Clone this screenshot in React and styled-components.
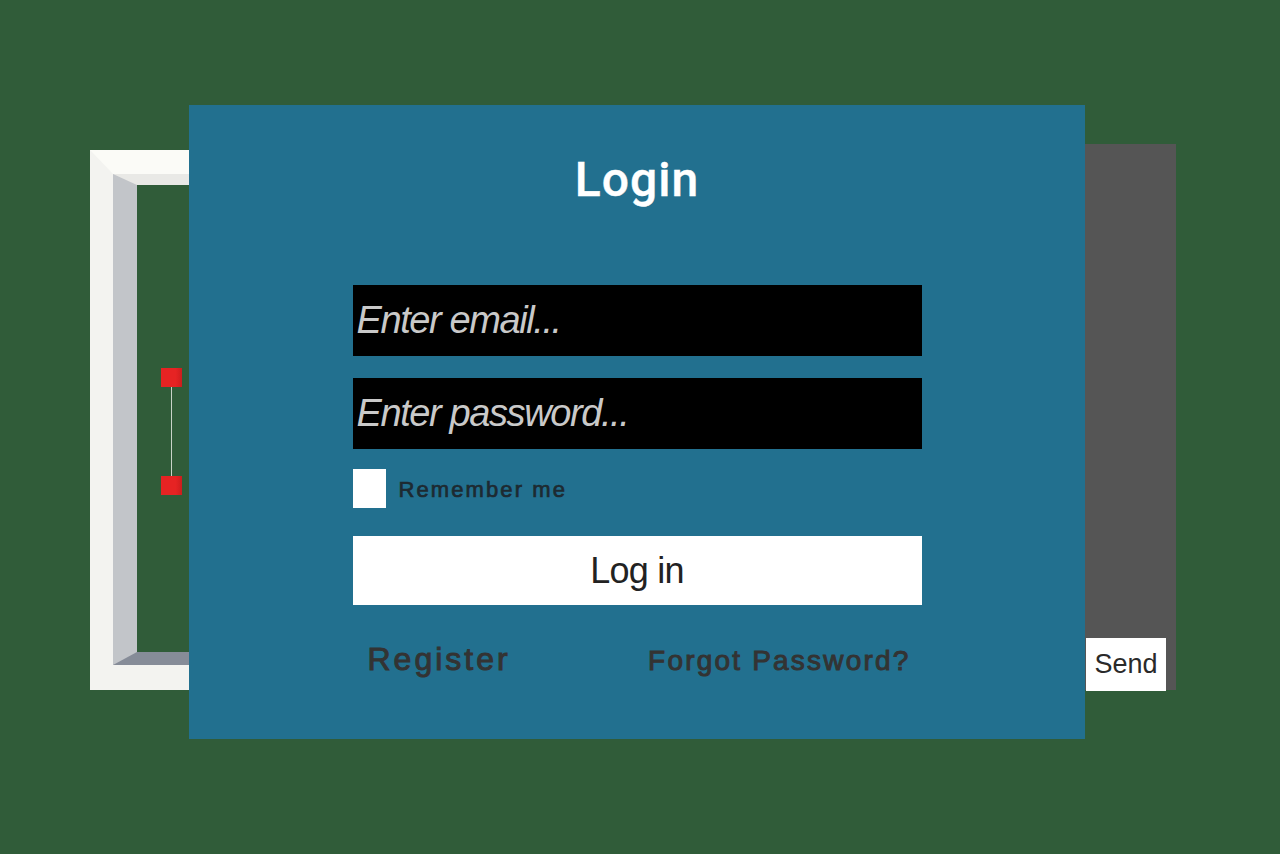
import React from 'react';
import styled, { createGlobalStyle } from 'styled-components';

const GlobalStyle = createGlobalStyle`
  html, body {
    margin: 0;
    padding: 0;
    background: #305c39;
    font-family: "Liberation Sans", Arial, sans-serif;
  }
  * { box-sizing: border-box; }
`;

const Page = styled.div`
  position: relative;
  width: 1280px;
  height: 854px;
  overflow: hidden;
  background: #305c39;
`;

const Scene = styled.div`
  display: flex;
  align-items: flex-start;
  padding: 144px 0 0 90px;
`;

const Frame = styled.div`
  margin-top: 6px;
  width: 995px;
  height: 540px;
  border-style: solid;
  border-color: #f3f3f0;
  border-width: 24px 22px 25px 23px;
  border-top-color: #fbfbf7;
`;

const Well = styled.div`
  position: relative;
  height: 100%;
  background: #305c39;
  border-style: solid;
  border-width: 11px 24px 13px 24px;
  border-color: #e9e9e6 #c2c5c9 #868c98 #c2c5c9;
`;

const Range = styled.div`
  position: absolute;
  left: 0;
  top: 183px;
  margin-left: 24px;
  display: flex;
  flex-direction: column;
  align-items: center;
  width: 21px;
`;

const Handle = styled.div`
  width: 21px;
  height: 19px;
  background: linear-gradient(to right, #e62323 70%, #cc1d1d);
`;

const Track = styled.div`
  width: 1px;
  height: 89px;
  background: #c9d3c8;
`;

const SidePanel = styled.div`
  width: 91px;
  height: 546px;
  background: #555555;
  display: flex;
  flex-direction: column;
  justify-content: flex-end;
`;

const SendButton = styled.button`
  width: 80px;
  height: 53px;
  margin: 0 0 -1px 1px;
  border: none;
  background: #ffffff;
  color: #2a2a2a;
  font-family: "Liberation Sans", Arial, sans-serif;
  font-size: 27px;
  padding: 0;
`;

const Modal = styled.div`
  position: absolute;
  left: 189px;
  top: 105px;
  width: 896px;
  height: 634px;
  background: #22708f;
  display: flex;
  flex-direction: column;
  align-items: center;
  padding-top: 47px;
`;

const Title = styled.h1`
  margin: 0;
  height: 56px;
  line-height: 56px;
  font-family: Roboto, "Liberation Sans", sans-serif;
  font-weight: 500;
  font-size: 48px;
  letter-spacing: 1px;
  color: #ffffff;
  -webkit-text-stroke: 0.4px #ffffff;
`;

const Form = styled.form`
  width: 569px;
  margin-top: 77px;
  display: flex;
  flex-direction: column;
`;

const Field = styled.input`
  height: 71px;
  margin-bottom: ${p => p.$gap}px;
  border: none;
  outline: none;
  background: #000000;
  color: #ffffff;
  padding: 0 0 0 4px;
  font-family: "Liberation Sans", Arial, sans-serif;
  font-style: italic;
  font-size: 38px;
  letter-spacing: -1.4px;
  &::placeholder {
    color: #c9c9c9;
    opacity: 1;
  }
`;

const CheckRow = styled.label`
  display: flex;
  align-items: center;
  gap: 13px;
  height: 40px;
  margin-bottom: 28px;
`;

const Box = styled.span`
  width: 33px;
  height: 39px;
  background: #ffffff;
`;

const CheckText = styled.span`
  padding-top: 4px;
  font-family: "Liberation Sans", Arial, sans-serif;
  font-size: 22px;
  letter-spacing: 2.1px;
  color: #1d2a31;
  -webkit-text-stroke: 0.7px #1d2a31;
`;

const Submit = styled.button`
  height: 69px;
  border: none;
  background: #ffffff;
  color: #222222;
  font-family: "Liberation Sans", Arial, sans-serif;
  font-size: 36px;
  letter-spacing: -0.8px;
  padding: 0;
`;

const Links = styled.div`
  margin-top: 36px;
  padding: 0 11px 0 15px;
  display: flex;
  justify-content: space-between;
  align-items: baseline;
`;

const LinkText = styled.a`
  font-family: "Liberation Sans", Arial, sans-serif;
  font-size: ${p => p.$size}px;
  letter-spacing: ${p => p.$spacing}px;
  color: #333333;
  text-decoration: none;
  -webkit-text-stroke: 1px #333333;
`;

export default function App() {
  return (
    <>
      <GlobalStyle />
      <Page>
        <Scene>
          <Frame>
            <Well>
              <Range>
                <Handle />
                <Track />
                <Handle />
              </Range>
            </Well>
          </Frame>
          <SidePanel>
            <SendButton>Send</SendButton>
          </SidePanel>
        </Scene>
        <Modal>
          <Title>Login</Title>
          <Form onSubmit={e => e.preventDefault()}>
            <Field type="email" placeholder="Enter email..." $gap={22} />
            <Field type="password" placeholder="Enter password..." $gap={19} />
            <CheckRow>
              <Box />
              <CheckText>Remember me</CheckText>
            </CheckRow>
            <Submit type="submit">Log in</Submit>
            <Links>
              <LinkText $size={32} $spacing={3}>Register</LinkText>
              <LinkText $size={28} $spacing={2.2}>Forgot Password?</LinkText>
            </Links>
          </Form>
        </Modal>
      </Page>
    </>
  );
}
